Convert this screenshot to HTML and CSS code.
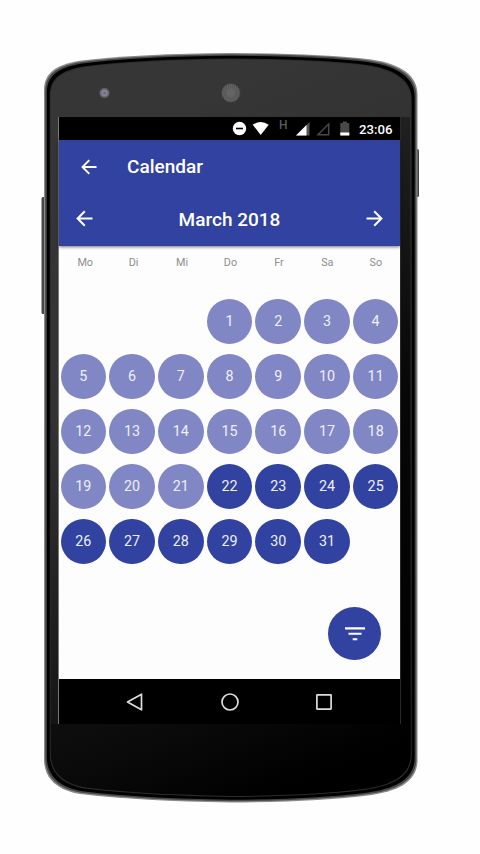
FILE: index.html
```html
<!DOCTYPE html>
<html lang="en">
<head>
<meta charset="utf-8">
<title>Calendar</title>
<link rel="stylesheet" href="styles.css">
</head>
<body>
<main class="stage">
  <svg class="phone" viewBox="0 0 480 854" aria-hidden="true">
    <defs>
      <linearGradient id="shade" gradientUnits="userSpaceOnUse" x1="-136" y1="-300" x2="136" y2="375">
        <stop offset="0" stop-color="#363636"/><stop offset=".15" stop-color="#323232"/><stop offset=".32" stop-color="#202020"/><stop offset=".5" stop-color="#191919"/><stop offset=".8" stop-color="#0b0b0b"/><stop offset=".95" stop-color="#000"/>
      </linearGradient>
      <linearGradient id="left" x1="0" y1="0" x2="0" y2="1">
        <stop offset="0" stop-color="#363636"/><stop offset=".5" stop-color="#333"/><stop offset="1" stop-color="#151515"/>
      </linearGradient>
      <linearGradient id="right" x1="0" y1="0" x2="0" y2="1">
        <stop offset="0" stop-color="#202020"/><stop offset=".45" stop-color="#070707"/><stop offset="1" stop-color="#000"/>
      </linearGradient>
      <path id="body" d="M-186.75-337.75C-186.75-354-176-363-150.75-367Q-90-374.2 .25-374.75Q89-374.5 139-368.5C171-364 186.75-352 186.75-333V332.25C186.75 355 166 363.5 139 367.5Q84 374.5 .25 374.75Q-90 373.5-150.75 366.25C-175 362-186.75 350-186.75 331.25Z"/>
    </defs>
    <rect x="41.5" y="197" width="4" height="117" rx="1.5" fill="#484848"/>
    <rect x="415" y="149" width="4" height="48" rx="1.5" fill="#444"/>
    <g transform="translate(230.75 427.75)">
      <use href="#body" fill="#8a8a8a"/>
      <use href="#body" fill="#484848" transform="scale(.9936 .9968)"/>
      <use href="#body" fill="#000" transform="scale(.985 .9925)"/>
      <use href="#body" fill="#2c2c2c" transform="scale(.969 .985)"/>
      <use href="#body" fill="url(#shade)" transform="scale(.964 .9825)"/>
    </g>
    <rect x="51" y="117" width="9" height="607" fill="url(#left)"/>
    <rect x="400" y="117" width="10" height="607" fill="url(#right)"/>
    <circle cx="104.5" cy="93" r="5" fill="#686868"/><circle cx="104.5" cy="93" r="3.2" fill="#858493"/><circle cx="104.5" cy="93" r="1.2" fill="#6262a1"/>
    <circle cx="230.8" cy="92.8" r="9" fill="#646464"/><circle cx="230.8" cy="92.8" r="7" fill="none" stroke="#555" stroke-width="5" stroke-dasharray="1 1"/>
  </svg>
  <section class="screen">
    <div class="status">
      <svg class="status-icons" viewBox="0 0 121 23" aria-hidden="true">
        <circle cx="7.5" cy="11.5" r="6.7" fill="#fff"/><path d="M4 11.5h7" stroke="#000" stroke-width="1.6"/>
        <path d="M20.7 7.7Q28.7 2.5 36.7 7.7L28.7 18Z" fill="#fff"/>
        <path d="M64 18.5L77.5 5v13.5Z" fill="#555"/><path d="M64 18.5L74.5 8v10.5Z" fill="#fff"/>
        <path d="M86 17.7L96.7 7v10.7Z" fill="none" stroke="#484848" stroke-width="1.5"/>
        <path d="M108.3 6h2.5V4.5h4V6h2.5v12.3h-9Z" fill="#484848"/><path d="M108.3 15.5h9v3h-9Z" fill="#fff"/>
      </svg>
      <span class="network">H</span>
      <span class="clock">23:06</span>
    </div>
    <header class="header">
      <div class="toolbar">
        <svg class="arrow" viewBox="0 0 16 16"><path d="M15.5 8H1.5M8.3 1.2L1.5 8l6.8 6.8"/></svg>
        <h1>Calendar</h1>
      </div>
      <div class="month">
        <svg class="arrow big" viewBox="0 0 16 16"><path d="M15.5 8H1.5M8.3 1.2L1.5 8l6.8 6.8"/></svg>
        <h2>March 2018</h2>
        <svg class="arrow big" viewBox="0 0 16 16"><path d="M.5 8h14M7.7 1.2L14.5 8l-6.8 6.8"/></svg>
      </div>
    </header>
    <div class="content">
      <div class="weekdays"><span>Mo</span><span>Di</span><span>Mi</span><span>Do</span><span>Fr</span><span>Sa</span><span>So</span></div>
      <div class="days">
        <b class="first">1</b><b>2</b><b>3</b><b>4</b>
        <b>5</b><b>6</b><b>7</b><b>8</b><b>9</b><b>10</b><b>11</b>
        <b>12</b><b>13</b><b>14</b><b>15</b><b>16</b><b>17</b><b>18</b>
        <b>19</b><b>20</b><b>21</b><b class="on">22</b><b class="on">23</b><b class="on">24</b><b class="on">25</b>
        <b class="on">26</b><b class="on">27</b><b class="on">28</b><b class="on">29</b><b class="on">30</b><b class="on">31</b>
      </div>
      <div class="fab"><svg viewBox="0 0 20 14"><path d="M0 1.4h20M3.5 6.8h13M7.7 12.2h4.6" stroke="#fff" stroke-width="2.1"/></svg></div>
    </div>
    <nav class="nav">
      <svg viewBox="0 0 18 18"><path d="M15.5 1.2v15.6L1.5 9Z"/></svg>
      <svg viewBox="0 0 18 18"><circle cx="9" cy="9" r="8"/></svg>
      <svg viewBox="0 0 18 18"><rect x="1.9" y="1.9" width="14.2" height="14.2" rx=".3"/></svg>
    </nav>
  </section>
</main>
</body>
</html>
```
FILE: styles.css
```css
* { box-sizing: border-box; }
body { margin: 0; background: #fefefe; font-family: Roboto, sans-serif; }
.stage { position: relative; width: 480px; height: 854px; padding: 117px 80px 0 59px; overflow: hidden; }
.phone { position: absolute; inset: 0; width: 480px; height: 854px; }
.screen { position: relative; width: 341px; height: 607px; display: flex; flex-direction: column; background: #fdfdfd; box-shadow: -1px 0 #777, 1px 0 #292929; }
.status { position: relative; height: 23px; background: #000; display: flex; align-items: center; justify-content: flex-end; padding-right: 8px; color: #fff; }
.status-icons { width: 121px; height: 23px; margin-right: 6px; }
.network { position: absolute; left: 220px; top: 2px; font-size: 12px; line-height: 13px; font-weight: 500; color: #5c5c5c; }
.clock { font-size: 13.2px; line-height: 23px; font-weight: 500; width: 33px; margin-top: 1px; white-space: nowrap; }
.header { height: 106px; flex: none; background: #3142a0; color: #fff; box-shadow: 0 1px 3px #0008; z-index: 1; }
.toolbar { height: 53px; display: flex; align-items: center; padding-left: 22px; gap: 30px; }
h1, h2 { margin: 0; font-weight: 500; line-height: 24px; white-space: nowrap; }
h1 { font-size: 19px; }
h2 { font-size: 19px; }
.arrow { width: 16px; height: 16px; fill: none; stroke: #fff; stroke-width: 1.9; }
.arrow.big { width: 17px; height: 17px; }
.month { height: 53px; display: flex; align-items: center; justify-content: space-between; padding: 0 17px 2px 17px; }
.month h2 { padding-top: 3px; }
.content { position: relative; height: 433px; flex: none; }
.weekdays { display: grid; grid-template-columns: repeat(7, 1fr); height: 48px; padding: 10px 0 0 2px; text-align: center; font-size: 10.8px; line-height: 14px; color: #8d8d8d; }
.days { display: grid; grid-template-columns: repeat(7, 1fr); grid-auto-rows: 55px; place-items: center; }
.days b { width: 45.6px; height: 45.6px; border-radius: 50%; background: #8187c4; color: #eeeffa; font-weight: 400; font-size: 14.3px; line-height: 45px; text-align: center; }
.days .first { grid-column: 4; }
.days .on { background: #3142a0; }
.fab { position: absolute; left: 269px; top: 361px; width: 53px; height: 53px; border-radius: 50%; background: #3142a0; display: grid; place-items: center; }
.fab svg { width: 20px; height: 14px; }
.nav { height: 45px; background: #000; display: flex; align-items: center; justify-content: space-between; padding: 0 67px; }
.nav svg { width: 18px; height: 18px; fill: none; stroke: #ddd; stroke-width: 1.7; stroke-linejoin: round; }
```
